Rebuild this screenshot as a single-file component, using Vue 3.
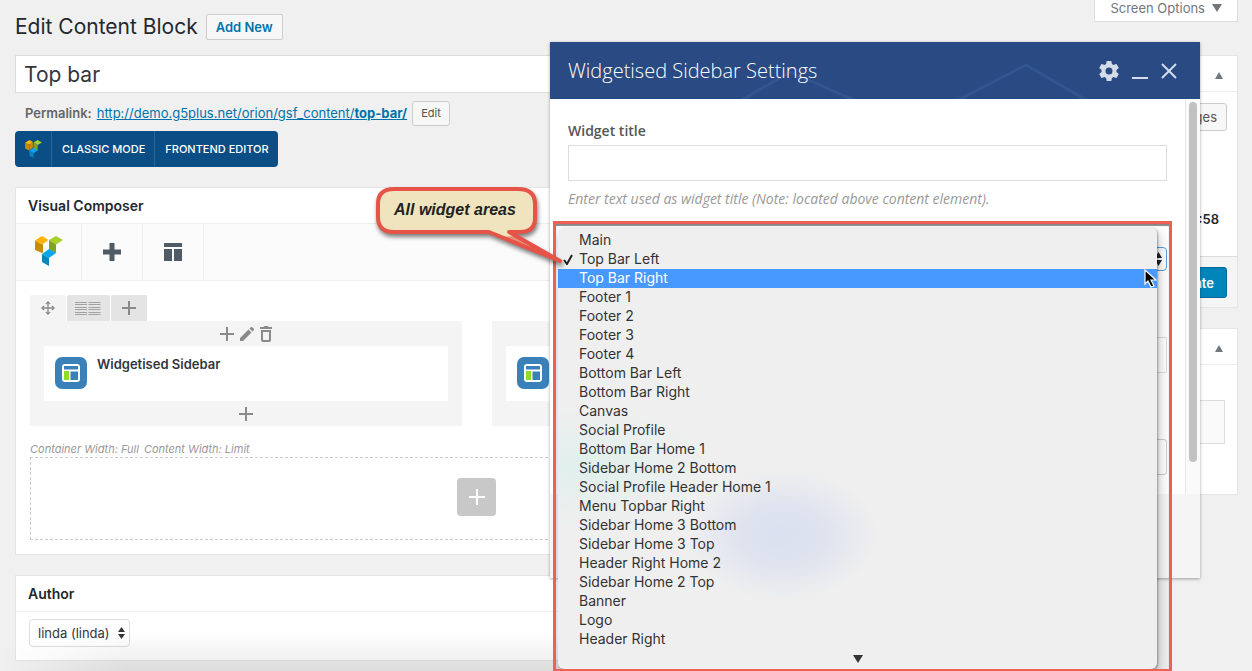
<template>
  <div class="page">
    <button class="screen-options" type="button">
      Screen Options
      <svg width="10" height="8" viewBox="0 0 10 8"><path d="M0 0h10L5 8z" fill="#72777c" /></svg>
    </button>

    <div class="layout">
      <main class="main-col">
        <header class="page-head">
          <h1>Edit Content Block</h1>
          <a href="#" class="add-new">Add New</a>
        </header>

        <input v-model="title" class="title-input" type="text" aria-label="Title" />

        <div class="permalink">
          <strong>Permalink:</strong>
          <a href="#">http://demo.g5plus.net/orion/gsf_content/<b>top-bar/</b></a>
          <button type="button">Edit</button>
        </div>

        <div class="mode-switch">
          <span class="mode-logo">
            <svg width="17" height="18" viewBox="0 0 28 30">
              <path d="M0 4.5 7 0l6 3.500-6 4.500z" fill="#ffb20a" />
              <path d="M0 4.500 7 8v9.500L0 14z" fill="#c98a05" />
              <path d="m7 8 6-4.500v9L7 17.500z" fill="#c98a05" />
              <path d="m14 4 7-4 7 4-7 4.500z" fill="#a8cf2a" />
              <path d="M14 4l7 4.500V18l-7-3.500z" fill="#7fa321" />
              <path d="m7 18 7-5 7 4.500-7 4.500z" fill="#0aa5ee" />
              <path d="m7 18 7 4v8l-7-4z" fill="#0a85bd" />
            </svg>
          </span>
          <button type="button">CLASSIC MODE</button>
          <button type="button">FRONTEND EDITOR</button>
        </div>

        <section class="box composer">
          <h2>Visual Composer</h2>
          <nav class="composer-nav">
            <a href="#" class="nav-logo" aria-label="Visual Composer">
              <svg width="28" height="30" viewBox="0 0 28 30">
                <path d="M0 4.500 7 0l6.500 4L7 8.500z" fill="#ffb20a" />
                <path d="M0 4.500 7 8.500V17L0 14z" fill="#c98a05" />
                <path d="m7 8.500 1-.7v8.700L7 17z" fill="#c98a05" />
                <path d="m14 4 7-4 7 4-7 4.500z" fill="#a8cf2a" />
                <path d="M14 4l7 4.500V17l-7-3.500z" fill="#7fa321" />
                <path d="m7 18 7-5 7 4-7 5z" fill="#0aa5ee" />
                <path d="m7 18 7 4v8l-7-4z" fill="#0a85bd" />
              </svg>
            </a>
            <button type="button" aria-label="Add element">
              <svg width="18" height="18" viewBox="0 0 18 18"><path d="M6.500 0h5v6.500H18v5h-6.500V18h-5v-6.500H0v-5h6.500z" fill="#4f5b66" /></svg>
            </button>
            <button type="button" aria-label="Templates">
              <svg width="18" height="18" viewBox="0 0 18 18"><path d="M0 0h18v4H0zM0 6h8v12H0zM10 6h8v12h-8z" fill="#4f5b66" /></svg>
            </button>
          </nav>

          <div class="composer-body">
            <div class="row-controls">
              <button type="button" class="move" aria-label="Move row">
                <svg width="14" height="14" viewBox="0 0 14 14" fill="none" stroke="#8a8a8a">
                  <path d="M7 1v12M1 7h12" stroke-width="1.300" />
                  <path d="M5 3l2-2 2 2M5 11l2 2 2-2M3 5 1 7l2 2M11 5l2 2-2 2" stroke-width="1.400" />
                </svg>
              </button>
              <button type="button" class="columns-btn" aria-label="Change layout">
                <svg width="26" height="14" viewBox="0 0 26 14">
                  <path d="M0 1.500h12M0 3.500h12M0 6.500h12M0 8.500h12M0 11.500h12M0 13.500h12M13.500 1.500h12M13.500 3.500h12M13.500 6.500h12M13.500 8.500h12M13.500 11.500h12M13.500 13.500h12" stroke="#a2a2a2" stroke-width="1" />
                </svg>
              </button>
              <button type="button" aria-label="Add column">
                <svg width="14" height="14" viewBox="0 0 14 14"><path d="M7 0v14M0 7h14" stroke="#8a8a8a" stroke-width="2" /></svg>
              </button>
            </div>

            <div class="row-columns">
              <div v-for="column in columns" :key="column.id" class="column">
                <div class="column-tools">
                  <template v-if="column.name">
                    <button type="button" aria-label="Add to column">
                      <svg width="14" height="14" viewBox="0 0 14 14"><path d="M7 0v14M0 7h14" stroke="#8a8a8a" stroke-width="2" /></svg>
                    </button>
                    <button type="button" aria-label="Edit column">
                      <svg width="14" height="14" viewBox="0 0 14 14" fill="#8a8a8a"><path d="M0 11 8.500 2.500l3 3L3 14H0zM9.500 1.500 11 0h1l2 2v1l-1.500 1.500z" /></svg>
                    </button>
                    <button type="button" aria-label="Delete column">
                      <svg width="12" height="16" viewBox="0 0 12 16">
                        <path d="M0 1h3.500l1-1h3l1 1H12v2H0z" fill="#8a8a8a" />
                        <path d="M2 5h8v9q0 1-1 1H3q-1 0-1-1z" fill="none" stroke="#8a8a8a" stroke-width="2" />
                      </svg>
                    </button>
                  </template>
                </div>
                <div class="element">
                  <svg width="32" height="32" viewBox="0 0 32 32">
                    <rect width="32" height="32" rx="7" fill="#3b81b9" />
                    <rect x="7" y="7" width="18" height="18" rx="3" fill="#fff" />
                    <path d="M9 9h14v3.500H9zM15.500 14.500H23V23h-7.500z" fill="#3b81b9" />
                    <path d="M9 14h5v9H9z" fill="#8edb2b" />
                  </svg>
                  <strong v-if="column.name">{{ column.name }}</strong>
                </div>
                <button type="button" class="column-add" aria-label="Append to column">
                  <svg width="14" height="14" viewBox="0 0 14 14"><path d="M7 0v14M0 7h14" stroke="#8a8a8a" stroke-width="2" /></svg>
                </button>
              </div>
            </div>

            <p class="row-info"><span>Container Width: Full</span><span>Content Width: Limit</span></p>
            <div class="drop-area">
              <button type="button" aria-label="Add row">
                <svg width="16" height="16" viewBox="0 0 16 16"><path d="M8 0v16M0 8h16" stroke="#fff" stroke-width="2" /></svg>
              </button>
            </div>
          </div>
        </section>

        <section class="box">
          <h2><label for="author">Author</label></h2>
          <div class="author-body">
            <span class="select-wrap">
              <select id="author"><option>linda (linda)</option></select>
              <svg width="7" height="12" viewBox="0 0 7 12"><path d="M0 5h7L3.500 0zM0 7h7l-3.500 5z" fill="#32373c" /></svg>
            </span>
          </div>
        </section>
      </main>

      <aside class="side-col">
        <section class="box">
          <div class="side-head">
            <svg width="8" height="7" viewBox="0 0 8 7"><path d="M0 7h8L4 0z" fill="#72777c" /></svg>
          </div>
          <div class="publish-body">
            <button type="button" class="preview">Preview Changes</button>
            <strong>10:58</strong>
          </div>
          <div class="publish-foot"><button type="button">Update</button></div>
        </section>
        <section class="box">
          <div class="side-head">
            <svg width="8" height="7" viewBox="0 0 8 7"><path d="M0 7h8L4 0z" fill="#72777c" /></svg>
          </div>
          <div class="note-body"><div class="note"></div></div>
        </section>
      </aside>
    </div>

    <div class="page-fade"></div>

    <div class="modal" role="dialog" aria-labelledby="modal-title">
      <header class="modal-head">
        <svg class="modal-lines" width="650" height="57" viewBox="0 0 650 57" fill="none" stroke="#31558e" stroke-width="3">
          <path d="M190 59l50-29 66 29M406 59l70-36 62 36" />
        </svg>
        <h2 id="modal-title">Widgetised Sidebar Settings</h2>
        <button type="button" aria-label="Settings">
          <svg width="20" height="20" viewBox="2 2 20 20" fill="#d4dcea"><path d="M19.430 12.980c.04-.32.070-.64.070-.98s-.03-.66-.07-.98l2.110-1.650c.19-.15.240-.42.120-.64l-2-3.460c-.12-.22-.39-.3-.61-.22l-2.490 1c-.52-.4-1.080-.73-1.690-.98l-.38-2.650A.49.490 0 0 0 14 2h-4c-.25 0-.46.180-.49.420l-.38 2.650c-.61.250-1.170.590-1.690.980l-2.490-1c-.23-.09-.49 0-.61.220l-2 3.460c-.13.220-.07.490.120.640l2.110 1.650c-.04.320-.07.650-.07.980s.03.660.07.980l-2.110 1.650c-.19.150-.24.420-.12.640l2 3.460c.12.220.39.300.61.220l2.490-1c.52.400 1.080.730 1.690.980l.38 2.650c.03.240.24.420.49.420h4c.25 0 .46-.18.490-.42l.38-2.650c.61-.25 1.170-.59 1.690-.98l2.490 1c.23.090.49 0 .61-.22l2-3.460c.12-.22.070-.49-.12-.64zM12 15.500a3.500 3.500 0 1 1 0-7 3.500 3.500 0 0 1 0 7z" /></svg>
        </button>
        <button type="button" aria-label="Minimize">
          <svg width="16" height="16" viewBox="0 0 16 16"><path d="M0 15h16" stroke="#d4dcea" stroke-width="2" /></svg>
        </button>
        <button type="button" aria-label="Close">
          <svg width="16" height="16" viewBox="0 0 16 16"><path d="m1 1 14 14M15 1 1 15" stroke="#d4dcea" stroke-width="2" /></svg>
        </button>
      </header>

      <div class="modal-body">
        <div class="fields">
          <label for="widget-title">Widget title</label>
          <input id="widget-title" v-model="widgetTitle" type="text" />
          <p>Enter text used as widget title (Note: located above content element).</p>
          <div class="area-field">
            <select v-model="selected" aria-label="Sidebar">
              <option v-for="area in areas" :key="area">{{ area }}</option>
            </select>
            <svg width="7" height="14" viewBox="0 0 7 14"><path d="M0 6h7L3.500 0zM0 8h7l-3.500 6z" fill="#222" /></svg>
          </div>
          <input class="id-field" type="text" aria-label="Element ID" />
          <input class="class-field" type="text" aria-label="Extra class name" />
        </div>
        <div class="scrollbar"><span></span></div>
      </div>
      <div class="modal-foot"></div>

      <div class="highlight">
        <ul class="menu" role="listbox" aria-label="Widget areas">
          <li
            v-for="area in areas"
            :key="area"
            role="option"
            :class="{ hovered: area === hovered }"
            :aria-selected="area === selected"
            @click="selected = area"
            @mouseenter="hovered = area"
          >
            <span class="tick">
              <svg v-if="area === selected" width="10" height="11" viewBox="0 0 10 11"><path d="m1 6 3 4 5-9" fill="none" stroke="#222" stroke-width="2" /></svg>
            </span>
            {{ area }}
          </li>
          <li class="more" role="presentation">
            <svg width="10" height="8" viewBox="0 0 10 8"><path d="M0 0h10L5 8z" fill="#333" /></svg>
          </li>
        </ul>
      </div>

      <svg class="cursor" width="14" height="20" viewBox="0 0 14 20">
        <path d="M2 1v14l3-3 3 6 3-1-3-6h5z" fill="#000" stroke="#fff" stroke-width="1.200" />
      </svg>
    </div>

    <div class="callout">
      <svg width="190" height="84" viewBox="0 0 190 84">
        <path d="M20 3h124q17 0 17 15v14q0 14-15 14h-11l51 29-71-29H20Q4 46 4 31V18Q4 3 20 3z" fill="#efe4be" stroke="#e65448" stroke-width="4" stroke-linejoin="round" />
        <path d="m128 51 57 24-44-25z" fill="#e65448" opacity=".6" />
      </svg>
      <span>All widget areas</span>
    </div>
  </div>
</template>

<script setup>
import { ref } from 'vue'

const title = ref('Top bar')
const widgetTitle = ref('')
const selected = ref('Top Bar Left')
const hovered = ref('Top Bar Right')

const columns = [
  { id: 1, name: 'Widgetised Sidebar' },
  { id: 2, name: '' }
]

const areas = [
  'Main',
  'Top Bar Left',
  'Top Bar Right',
  'Footer 1',
  'Footer 2',
  'Footer 3',
  'Footer 4',
  'Bottom Bar Left',
  'Bottom Bar Right',
  'Canvas',
  'Social Profile',
  'Bottom Bar Home 1',
  'Sidebar Home 2 Bottom',
  'Social Profile Header Home 1',
  'Menu Topbar Right',
  'Sidebar Home 3 Bottom',
  'Sidebar Home 3 Top',
  'Header Right Home 2',
  'Sidebar Home 2 Top',
  'Banner',
  'Logo',
  'Header Right'
]
</script>

<style>
body {
  margin: 0;
  background: #f0f0f0;
}
</style>

<style scoped>
* {
  box-sizing: border-box;
}

.page {
  position: relative;
  height: 100vh;
  overflow: hidden;
  background: #f0f0f0;
  color: #23282d;
  font-family: Inter, Roboto, sans-serif;
  font-size: 13px;
}

button,
input,
select {
  font-family: inherit;
  margin: 0;
}

button {
  border: 0;
  padding: 0;
  background: none;
  cursor: pointer;
}

svg {
  display: block;
  flex: none;
}

.screen-options {
  position: absolute;
  top: -1px;
  right: 14px;
  display: flex;
  align-items: center;
  gap: 7px;
  height: 23px;
  padding: 0 15px 6px;
  background: #fff;
  border: 1px solid #ddd;
  color: #72777c;
  font-size: 13px;
  white-space: nowrap;
}

.layout {
  display: flex;
  gap: 20px;
  padding: 0 14px 0 15px;
}

.main-col {
  flex: 1;
  min-width: 0;
}

.side-col {
  width: 280px;
  padding-top: 55px;
}

.page-head {
  display: flex;
  align-items: center;
  gap: 8px;
  height: 55px;
  padding-bottom: 2px;
}

h1 {
  margin: 0;
  font-size: 21px;
  font-weight: 400;
}

.add-new {
  padding: 0 9px;
  background: #f7f7f7;
  border: 1px solid #ccc;
  border-radius: 2px;
  color: #0073aa;
  font-weight: 600;
  line-height: 24px;
  text-decoration: none;
}

.title-input {
  display: block;
  width: 100%;
  height: 38px;
  padding: 0 8px;
  border: 1px solid #ddd;
  background: #fff;
  color: #32373c;
  font-size: 21px;
}

.permalink {
  display: flex;
  align-items: center;
  gap: 5px;
  height: 38px;
  padding: 2px 10px 0;
  color: #666;
}

.permalink strong {
  font-weight: 600;
}

.permalink a {
  color: #0073aa;
}

.permalink button {
  height: 25px;
  padding: 0 8px;
  border: 1px solid #ccc;
  border-radius: 3px;
  background: #f7f7f7;
  color: #555;
  font-size: 11px;
}

.mode-switch {
  display: inline-flex;
  height: 36px;
  border-radius: 4px;
  overflow: hidden;
  background: #0b4d85;
  vertical-align: top;
}

.mode-logo {
  display: flex;
  align-items: center;
  width: 36px;
  padding-left: 10px;
}

.mode-switch button {
  padding: 0 9px 0 10px;
  border-left: 1px solid #2b6496;
  color: #fff;
  font-size: 11px;
  font-weight: 500;
}

.box {
  margin-bottom: 20px;
  background: #fff;
  border: 1px solid #e5e5e5;
}

.box h2 {
  margin: 0;
  padding: 0 12px;
  height: 36px;
  border-bottom: 1px solid #eee;
  font-size: 14px;
  font-weight: 600;
  line-height: 36px;
}

.composer {
  margin-top: 20px;
}

.composer-nav {
  display: flex;
  height: 57px;
  background: #fbfbfb;
  border-bottom: 1px solid #eee;
}

.composer-nav a,
.composer-nav button {
  display: flex;
  align-items: center;
  justify-content: center;
  width: 61px;
  border-right: 1px solid #f0f0f0;
}

.composer-nav .nav-logo {
  width: 66px;
  padding-bottom: 3px;
}

.composer-body {
  padding: 14px;
}

.row-controls {
  display: flex;
  gap: 1px;
}

.row-controls button {
  display: flex;
  align-items: center;
  justify-content: center;
  width: 36px;
  height: 26px;
  border-radius: 2px 2px 0 0;
  background: #e4e4e4;
}

.row-controls .move {
  background: #f4f4f4;
}

.row-controls .columns-btn {
  width: 43px;
  padding-right: 2px;
}

.row-columns {
  display: flex;
  gap: 30px;
}

.column {
  flex: 1;
  padding: 0 14px;
  background: #f4f4f4;
}

.column-tools {
  display: flex;
  align-items: center;
  justify-content: center;
  gap: 6px;
  height: 25px;
}

.element {
  display: flex;
  gap: 10px;
  height: 55px;
  padding: 11px;
  background: #fff;
  color: #32373c;
}

.element strong {
  font-weight: 600;
  line-height: 15px;
}

.column-add {
  display: flex;
  align-items: center;
  justify-content: center;
  width: 100%;
  height: 25px;
}

.row-info {
  display: flex;
  gap: 5px;
  margin: 15px 0 0;
  color: #999;
  font-size: 11px;
  font-style: italic;
  line-height: 16px;
}

.drop-area {
  display: flex;
  align-items: center;
  justify-content: center;
  height: 83px;
  padding-bottom: 4px;
  border: 1px dashed #ccc;
}

.drop-area button {
  display: flex;
  align-items: center;
  justify-content: center;
  width: 39px;
  height: 38px;
  border-radius: 4px;
  background: #c8c8c8;
}

.author-body {
  padding: 7px 13px 13px;
}

.select-wrap {
  position: relative;
  display: inline-block;
  vertical-align: top;
}

.select-wrap select {
  appearance: none;
  height: 28px;
  padding: 0 19px 0 8px;
  border: 1px solid #ddd;
  border-radius: 4px;
  background: #fff;
  color: #32373c;
  font-size: 13px;
}

.select-wrap svg {
  position: absolute;
  top: 8px;
  right: 5px;
  pointer-events: none;
}

.side-head {
  display: flex;
  align-items: center;
  justify-content: flex-end;
  height: 36px;
  padding: 4px 14px 0 0;
  border-bottom: 1px solid #eee;
}

.publish-body {
  display: flex;
  flex-direction: column;
  align-items: flex-end;
  justify-content: space-between;
  height: 164px;
  padding: 11px 10px 29px;
}

.publish-body strong {
  padding-right: 8px;
  font-weight: 600;
}

.preview {
  height: 28px;
  padding: 0 9px;
  border: 1px solid #ccc;
  border-radius: 3px;
  background: #f7f7f7;
  color: #555;
  font-size: 13px;
}

.publish-foot {
  display: flex;
  justify-content: flex-end;
  padding: 10px 10px 9px;
  background: #f5f5f5;
  border-top: 1px solid #ddd;
}

.publish-foot button {
  height: 31px;
  padding: 0 12px;
  border: 1px solid #006799;
  border-radius: 3px;
  background: #0085ba;
  color: #fff;
  font-size: 13px;
  font-weight: 600;
}

.note-body {
  padding: 35px 12px 50px;
}

.note {
  height: 44px;
  border: 1px solid #ddd;
  background: #fafafa;
}

.page-fade {
  position: absolute;
  right: 0;
  bottom: 0;
  left: 0;
  height: 40px;
  background: linear-gradient(rgba(0, 0, 0, 0), rgba(0, 0, 0, 0.08));
  -webkit-mask-image: linear-gradient(90deg, transparent, #000 10%, #000 50%, transparent 90%);
  mask-image: linear-gradient(90deg, transparent, #000 10%, #000 50%, transparent 90%);
}

.modal {
  position: absolute;
  top: 42px;
  right: 52px;
  width: 650px;
  box-shadow: 0 1px 3px rgba(0, 0, 0, 0.35);
  font-family: 'Open Sans', sans-serif;
}

.modal-head {
  position: relative;
  display: flex;
  align-items: center;
  gap: 13px;
  height: 57px;
  padding: 0 23px 0 18px;
  overflow: hidden;
  background: #294a82;
}

.modal-lines {
  position: absolute;
  top: 0;
  left: 0;
}

.modal-head h2 {
  position: relative;
  flex: 1;
  margin: 0;
  color: #fff;
  font-size: 20px;
  font-weight: 300;
}

.modal-head button {
  position: relative;
}

.modal-body {
  display: flex;
  height: 395px;
  background: #fff;
}

.fields {
  flex: 1;
  padding: 22px 18px 0;
}

.fields label {
  display: block;
  color: #555;
  font-size: 14px;
  font-weight: 600;
  line-height: 20px;
}

.fields input {
  display: block;
  width: 100%;
  height: 36px;
  margin-top: 4px;
  padding: 0 8px;
  border: 1px solid #ddd;
  background: #fff;
}

.fields p {
  margin: 8px 0 38px;
  color: #999;
  font-size: 14px;
  font-style: italic;
  line-height: 20px;
}

.area-field {
  position: relative;
}

.area-field select {
  appearance: none;
  display: block;
  width: 100%;
  height: 24px;
  padding: 0 10px;
  border: 1px solid #5b9dd9;
  border-radius: 4px;
  background: #fff;
}

.area-field svg {
  position: absolute;
  top: 5px;
  right: 5px;
}

.fields .id-field {
  margin-top: 66px;
}

.fields .class-field {
  margin-top: 66px;
  border-color: #ccc;
  border-radius: 3px;
}

.scrollbar {
  width: 15px;
  padding: 3px;
  border-left: 1px solid #e8e8e8;
  background: #fafafa;
}

.scrollbar span {
  display: block;
  width: 8px;
  height: 360px;
  border-radius: 4px;
  background: #c1c1c1;
}

.modal-foot {
  height: 84px;
  background: #f5f5f5;
}

.highlight {
  position: absolute;
  top: 179px;
  right: 28px;
  left: 3px;
  padding: 3px 12px 0 2px;
  border: 3px solid #ee6055;
  box-shadow: inset 0 2px 1px #888;
}

.menu {
  margin: 0;
  padding: 4px 0 1px;
  list-style: none;
  border-radius: 6px;
  background:
    radial-gradient(ellipse 95px 65px at 225px 308px, rgba(212, 220, 239, 0.8), rgba(212, 220, 239, 0.6) 45%, rgba(239, 239, 239, 0)),
    radial-gradient(ellipse 130px 60px at 25px 240px, rgba(222, 240, 236, 0.9), rgba(239, 239, 239, 0)),
    #efefef;
  box-shadow: 1px 1px 2px rgba(0, 0, 0, 0.3), 2px 6px 12px rgba(0, 0, 0, 0.25);
  clip-path: inset(0 -11px 0 -2px);
  color: #333;
  font-family: Inter, Roboto, sans-serif;
  font-size: 14px;
  line-height: 18px;
}

.menu li {
  display: flex;
  align-items: flex-start;
  height: 19px;
  white-space: nowrap;
}

.menu .hovered {
  background: #4799ff;
  color: #fff;
}

.tick {
  width: 21px;
  padding: 4px 0 0 5px;
}

.menu .more {
  align-items: center;
  justify-content: center;
}

.cursor {
  position: absolute;
  top: 227px;
  right: 43px;
}

.callout {
  position: absolute;
  top: 186px;
  left: 374px;
}

.callout svg {
  filter: drop-shadow(1px 3px 2px rgba(0, 0, 0, 0.5));
}

.callout span {
  position: absolute;
  top: 15px;
  left: 20px;
  color: #222;
  font: italic bold 16px/18px 'Liberation Sans', Arial, sans-serif;
  white-space: nowrap;
}
</style>
